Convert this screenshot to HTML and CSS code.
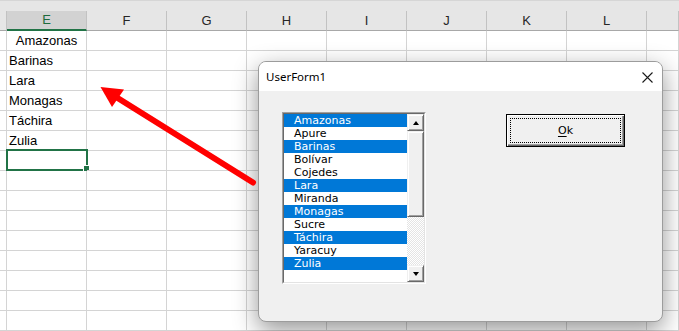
FILE: index.html
```html
<!DOCTYPE html>
<html lang="es">
<head>
    <meta charset="UTF-8">
    <meta name="viewport" content="width=device-width, initial-scale=1.0">
    <title>UserForm1</title>
    <link rel="stylesheet" href="styles.css">
</head>
<body>
    <div class="topbar"></div>

    <!-- hoja de calculo -->
    <div class="sheet">
        <div class="row head">
            <div class="c"></div><div class="c active">E</div><div class="c">F</div><div class="c">G</div><div class="c">H</div><div class="c">I</div><div class="c">J</div><div class="c">K</div><div class="c">L</div><div class="c"></div>
        </div>
        <div class="row"><div class="c"></div><div class="c center">Amazonas</div><div class="c"></div><div class="c"></div><div class="c"></div><div class="c"></div><div class="c"></div><div class="c"></div><div class="c"></div><div class="c"></div></div>
        <div class="row"><div class="c"></div><div class="c">Barinas</div><div class="c"></div><div class="c"></div><div class="c"></div><div class="c"></div><div class="c"></div><div class="c"></div><div class="c"></div><div class="c"></div></div>
        <div class="row"><div class="c"></div><div class="c">Lara</div><div class="c"></div><div class="c"></div><div class="c"></div><div class="c"></div><div class="c"></div><div class="c"></div><div class="c"></div><div class="c"></div></div>
        <div class="row"><div class="c"></div><div class="c">Monagas</div><div class="c"></div><div class="c"></div><div class="c"></div><div class="c"></div><div class="c"></div><div class="c"></div><div class="c"></div><div class="c"></div></div>
        <div class="row"><div class="c"></div><div class="c">Táchira</div><div class="c"></div><div class="c"></div><div class="c"></div><div class="c"></div><div class="c"></div><div class="c"></div><div class="c"></div><div class="c"></div></div>
        <div class="row"><div class="c"></div><div class="c">Zulia</div><div class="c"></div><div class="c"></div><div class="c"></div><div class="c"></div><div class="c"></div><div class="c"></div><div class="c"></div><div class="c"></div></div>
        <div class="row"><div class="c"></div><div class="c selected"></div><div class="c"></div><div class="c"></div><div class="c"></div><div class="c"></div><div class="c"></div><div class="c"></div><div class="c"></div><div class="c"></div></div>
        <div class="row"><div class="c"></div><div class="c"></div><div class="c"></div><div class="c"></div><div class="c"></div><div class="c"></div><div class="c"></div><div class="c"></div><div class="c"></div><div class="c"></div></div>
        <div class="row"><div class="c"></div><div class="c"></div><div class="c"></div><div class="c"></div><div class="c"></div><div class="c"></div><div class="c"></div><div class="c"></div><div class="c"></div><div class="c"></div></div>
        <div class="row"><div class="c"></div><div class="c"></div><div class="c"></div><div class="c"></div><div class="c"></div><div class="c"></div><div class="c"></div><div class="c"></div><div class="c"></div><div class="c"></div></div>
        <div class="row"><div class="c"></div><div class="c"></div><div class="c"></div><div class="c"></div><div class="c"></div><div class="c"></div><div class="c"></div><div class="c"></div><div class="c"></div><div class="c"></div></div>
        <div class="row"><div class="c"></div><div class="c"></div><div class="c"></div><div class="c"></div><div class="c"></div><div class="c"></div><div class="c"></div><div class="c"></div><div class="c"></div><div class="c"></div></div>
        <div class="row"><div class="c"></div><div class="c"></div><div class="c"></div><div class="c"></div><div class="c"></div><div class="c"></div><div class="c"></div><div class="c"></div><div class="c"></div><div class="c"></div></div>
        <div class="row"><div class="c"></div><div class="c"></div><div class="c"></div><div class="c"></div><div class="c"></div><div class="c"></div><div class="c"></div><div class="c"></div><div class="c"></div><div class="c"></div></div>
        <div class="row"><div class="c"></div><div class="c"></div><div class="c"></div><div class="c"></div><div class="c"></div><div class="c"></div><div class="c"></div><div class="c"></div><div class="c"></div><div class="c"></div></div>
    </div>

    <!-- formulario -->
    <div class="userform">
        <div class="uf-title">
            <span>UserForm1</span>
            <svg class="uf-close" width="11" height="11" viewBox="0 0 11 11">
                <path d="M0.5 0.5 L10.5 10.5 M10.5 0.5 L0.5 10.5" stroke="#1a1a1a" stroke-width="1.1" fill="none"/>
            </svg>
        </div>
        <div class="uf-body">
            <div class="listbox">
                <div class="lb-inner">
                    <ul class="lb-items">
                        <li class="on">Amazonas</li>
                        <li>Apure</li>
                        <li class="on">Barinas</li>
                        <li>Bolívar</li>
                        <li>Cojedes</li>
                        <li class="on">Lara</li>
                        <li>Miranda</li>
                        <li class="on">Monagas</li>
                        <li>Sucre</li>
                        <li class="on">Táchira</li>
                        <li>Yaracuy</li>
                        <li class="on">Zulia</li>
                    </ul>
                    <div class="vscroll">
                        <div class="sb-btn"><span class="tri up"></span></div>
                        <div class="sb-thumb"></div>
                        <div class="sb-track"></div>
                        <div class="sb-btn"><span class="tri down"></span></div>
                    </div>
                </div>
            </div>
            <button class="ok-btn"><span class="focus"><u>O</u>k</span></button>
        </div>
    </div>

    <!-- flecha -->
    <svg class="arrow" width="679" height="331" viewBox="0 0 679 331">
        <line x1="253" y1="182.5" x2="116" y2="97" stroke="#ff0000" stroke-width="6" stroke-linecap="round"/>
        <polygon points="100.5,87 124,89.5 112,107" fill="#ff0000"/>
    </svg>
</body>
</html>
```

FILE: styles.css
```css
body {
    margin: 0;
    width: 679px;
    height: 331px;
    overflow: hidden;
    position: relative;
    background-color: #ffffff;
    font-family: 'Liberation Sans', Arial, sans-serif;
}

.topbar {
    height: 11px;
    background-color: #e6e6e6;
    border-top: 1px solid #d6d6d6;
    box-sizing: border-box;
}

.row {
    display: grid;
    grid-template-columns: 7px repeat(8, 80px) 1fr;
    height: 20px;
}

.c {
    position: relative;
    box-sizing: border-box;
    height: 20px;
    border-right: 1px solid #d4d4d4;
    border-bottom: 1px solid #d4d4d4;
    font-size: 13px;
    line-height: 19px;
    padding-left: 2px;
    color: #000;
    white-space: nowrap;
}

.c.center {
    text-align: center;
    padding-left: 0;
}

.head .c {
    background-color: #e6e6e6;
    border-right: 1px solid #c2c2c2;
    border-bottom: 1px solid #a8a8a8;
    text-align: center;
    padding-left: 0;
    color: #262626;
}

.head .c.active {
    background-color: #d2d2d2;
    color: #1d6b3d;
    border-bottom: 2px solid #217346;
    line-height: 18px;
}

.c.selected::before {
    content: "";
    position: absolute;
    left: -1px;
    top: -2px;
    right: -2px;
    bottom: -1px;
    border: 2px solid #217346;
}

.c.selected::after {
    content: "";
    position: absolute;
    right: -3px;
    bottom: -1px;
    width: 5px;
    height: 5px;
    background-color: #217346;
    box-shadow: 0 0 0 1px #ffffff;
}

/* UserForm */
.userform {
    position: absolute;
    left: 258px;
    top: 61px;
    width: 405px;
    height: 261px;
    box-sizing: border-box;
    border: 1px solid #9c9c9c;
    border-radius: 8px;
    overflow: hidden;
    background-color: #f0f0f0;
    box-shadow: 0 8px 24px rgba(0, 0, 0, 0.42);
}

.uf-title {
    display: flex;
    justify-content: space-between;
    align-items: center;
    height: 29px;
    padding: 0 9px 0 7px;
    background-color: #ffffff;
    font-family: 'Noto Sans', sans-serif;
    font-size: 11.5px;
    color: #000;
}

.uf-close {
    display: block;
    margin-top: 1px;
}

.uf-body {
    display: flex;
    align-items: flex-start;
    gap: 80px;
    padding: 21px 0 0 23px;
}

.listbox {
    width: 144px;
    height: 172px;
    box-sizing: border-box;
    border: 1px solid;
    border-color: #a0a0a0 #ffffff #ffffff #a0a0a0;
}

.lb-inner {
    display: flex;
    height: 100%;
    box-sizing: border-box;
    border: 1px solid;
    border-color: #696969 #e3e3e3 #e3e3e3 #696969;
    background-color: #ffffff;
}

.lb-items {
    list-style: none;
    margin: 0;
    padding: 0;
    flex: 1;
    font-family: 'DejaVu Sans', Tahoma, sans-serif;
    font-size: 11px;
}

.lb-items li {
    height: 13px;
    line-height: 13px;
    padding-left: 10px;
    color: #000;
}

.lb-items li.on {
    background-color: #0078d7;
    color: #ffffff;
}

.vscroll {
    display: flex;
    flex-direction: column;
    width: 17px;
}

.sb-btn, .sb-thumb {
    box-sizing: border-box;
    border: 1px solid;
    border-color: #f0f0f0 #696969 #696969 #f0f0f0;
    box-shadow: inset 1px 1px #ffffff, inset -1px -1px #a0a0a0;
    background-color: #f0f0f0;
}

.sb-btn {
    height: 17px;
    display: flex;
    align-items: center;
    justify-content: center;
}

.sb-thumb {
    height: 86px;
}

.sb-track {
    height: 48px;
    background: repeating-conic-gradient(#e4e4e4 0 25%, #ffffff 0 50%) 0 0 / 2px 2px;
}

.tri {
    width: 0;
    height: 0;
    border-left: 3.5px solid transparent;
    border-right: 3.5px solid transparent;
}

.tri.up {
    border-bottom: 4px solid #000;
}

.tri.down {
    border-top: 4px solid #000;
}

.ok-btn {
    width: 119px;
    height: 33px;
    margin-top: 2px;
    padding: 3px;
    box-sizing: border-box;
    border: 1px solid #000000;
    background-color: #f0f0f0;
    box-shadow: inset 1px 1px #ffffff, inset -1px -1px #696969, inset -2px -2px #a0a0a0;
    font-family: 'DejaVu Sans', Tahoma, sans-serif;
    font-size: 11px;
    color: #000;
}

.ok-btn .focus {
    display: flex;
    align-items: center;
    justify-content: center;
    height: 100%;
    border: 1px dotted #000;
    box-sizing: border-box;
}

.ok-btn u {
    text-underline-offset: 2px;
}

.arrow {
    position: absolute;
    left: 0;
    top: 0;
    pointer-events: none;
}
```
